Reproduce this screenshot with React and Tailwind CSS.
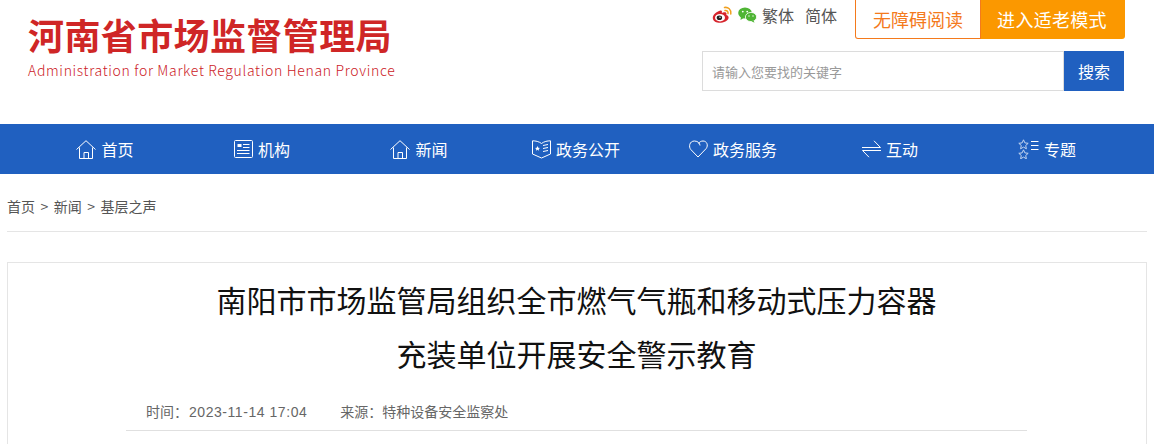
const cjk = { fontFamily: '"Noto Sans CJK SC", "Liberation Sans", sans-serif' };

function WeiboIcon() {
  return (
    <svg width="21" height="18" viewBox="0 0 21 18" fill="none">
      <path d="M8.5 4.5C4.5 5.5 0.5 9 0.8 12.2C1.1 15.5 5 17 9 16.7C13.5 16.3 16.8 14 16.6 11.3C16.5 10 15.3 9.3 14.3 9C14.8 7.5 14.6 6.4 13 6.2C11.8 6.1 10.5 6.6 9.8 7C10.3 5 9.8 4.2 8.5 4.5Z" fill="#d6242c" />
      <ellipse cx="8" cy="11.7" rx="5" ry="3.7" fill="#fff" />
      <ellipse cx="7.4" cy="11.8" rx="2.7" ry="2.3" fill="#222" />
      <circle cx="8" cy="11.2" r="0.7" fill="#fff" />
      <path d="M12.5 1.5C16 0.8 19.5 3.5 18.8 8M13 4.6C14.8 4.2 16.4 5.5 16 7.6" stroke="#f0a020" strokeWidth="1.5" strokeLinecap="round" />
    </svg>
  );
}

function WechatIcon() {
  return (
    <svg width="19" height="16" viewBox="0 0 19 16">
      <ellipse cx="7" cy="6" rx="6.8" ry="5.6" fill="#4fb535" />
      <path d="M3 9.5L2.5 13L6 10.8Z" fill="#4fb535" />
      <ellipse cx="13" cy="10" rx="5.6" ry="4.6" fill="#4fb535" stroke="#fff" strokeWidth="0.8" />
      <path d="M15.5 13.5L16.5 15.7L13.5 14.3Z" fill="#4fb535" />
      <circle cx="4.8" cy="4.6" r="0.9" fill="#fff" />
      <circle cx="9.2" cy="4.6" r="0.9" fill="#fff" />
      <circle cx="11" cy="9" r="0.7" fill="#fff" />
      <circle cx="15" cy="9" r="0.7" fill="#fff" />
    </svg>
  );
}

function HomeIcon() {
  return (
    <svg width="20" height="19" viewBox="0 0 20 19" fill="none" stroke="#fff" strokeWidth="1">
      <path d="M0.5 9.5L10 0.7L19.5 9.5" />
      <path d="M3.5 7.5V18.5H16.5V7.5" />
      <path d="M8 18.5V12.5H12.5V18.5" />
    </svg>
  );
}

function OrgIcon() {
  return (
    <svg width="19" height="18" viewBox="0 0 19 18" fill="none" stroke="#fff" strokeWidth="1">
      <rect x="0.5" y="0.5" width="18" height="17" rx="1" />
      <rect x="3.5" y="4" width="4" height="3" fill="#fff" stroke="none" />
      <path d="M9 4.5H15.5M9 7.5H15.5M3 10.5H15.5M3 13.5H15.5" />
    </svg>
  );
}

function BookIcon() {
  return (
    <svg width="19" height="19" viewBox="0 0 19 19" fill="none" stroke="#fff" strokeWidth="1">
      <path d="M0.5 0.8C3.5 0.8 7 1.5 9.5 3.5C12 1.5 15.5 0.8 18.5 0.8V14L9.5 18L0.5 14Z" />
      <path d="M5.5 6L6.3 7.7L8 7.9L6.7 9L7.1 10.7L5.5 9.8L3.9 10.7L4.3 9L3 7.9L4.7 7.7Z" fill="#fff" stroke="none" />
      <path d="M11 5.5L16 4.5M11 8.5L16 7.5M11 11.5L16 10.5" />
    </svg>
  );
}

function HeartIcon() {
  return (
    <svg width="19" height="18" viewBox="0 0 19 18" fill="none" stroke="#fff" strokeWidth="1">
      <path d="M9 17L1.8 9.5C-0.5 7 0.3 1 5.5 1C9 1 11 3.5 11 5.5M9 17L17.2 8.5C19.5 5.5 18 1 14 1C12 1 10.5 2 9.5 3.5" />
    </svg>
  );
}

function SwapIcon() {
  return (
    <svg width="19" height="18" viewBox="0 0 19 18" fill="none" stroke="#fff" strokeWidth="1">
      <path d="M0 7.5H18.5L12 0.8" />
      <path d="M19 10.5H0.5L7 17.2" />
    </svg>
  );
}

function StarsIcon() {
  const star = "M5.5 0.8L6.9 3.9L10.2 4.3L7.7 6.5L8.4 9.8L5.5 8.1L2.6 9.8L3.3 6.5L0.8 4.3L4.1 3.9Z";
  return (
    <svg width="21" height="20" viewBox="0 0 21 20" fill="none" stroke="#fff" strokeWidth="1">
      <path d={star} stroke="#c5d6f0" />
      <path d={star} stroke="#c5d6f0" transform="translate(0 10)" />
      <path d="M13 2.5H20.5M13 6.5H20.5M13 10.5H20.5" />
    </svg>
  );
}

const navItems = [
  { label: "首页", icon: <HomeIcon /> },
  { label: "机构", icon: <OrgIcon /> },
  { label: "新闻", icon: <HomeIcon /> },
  { label: "政务公开", icon: <BookIcon /> },
  { label: "政务服务", icon: <HeartIcon /> },
  { label: "互动", icon: <SwapIcon /> },
  { label: "专题", icon: <StarsIcon /> },
];

export default function App() {
  return (
    <div className="h-[444px] overflow-hidden bg-white" style={cjk}>
      {/* Header */}
      <div className="flex h-[124px] justify-between pl-[28px] pr-[29px]">
        <div className="pt-[12px]">
          <h1 className="text-[36px] leading-[44px] font-bold tracking-[0.4px] whitespace-nowrap text-[#cf2626]">河南省市场监督管理局</h1>
          <p className="mt-[4px] text-[14px] leading-[20px] font-light tracking-[0.67px] whitespace-nowrap text-[#cc2026]">Administration for Market Regulation Henan Province</p>
        </div>
        <div className="flex w-[423px] flex-col items-start">
          <div className="flex h-[39px] w-full items-start justify-between pl-[10px]">
            <div className="flex items-center pt-[4px] text-[16px] leading-[22px] text-[#555]">
              <WeiboIcon />
              <span className="ml-[5px]"><WechatIcon /></span>
              <span className="ml-[5px]">繁体</span>
              <span className="ml-[11px]">简体</span>
            </div>
            <div className="flex h-[39px] text-[18px]">
              <div className="flex w-[126px] items-center justify-center rounded-bl-[3px] border border-t-0 border-[#f47a1c] text-[#f47a1c]">无障碍阅读</div>
              <div className="flex w-[144px] items-center justify-center rounded-br-[3px] bg-[#fb9800] pr-[2px] text-white">
                <span className="tracking-[0.3px]">进入适老模式</span>
              </div>
            </div>
          </div>
          <div className="mt-[12px] flex h-[40px] w-[422px]">
            <div className="flex flex-1 items-center border border-[#dcdcdc] pt-[1px] pl-[9px] text-[13px] text-[#999]">请输入您要找的关键字</div>
            <div className="flex w-[60px] items-center justify-center bg-[#2060c0] text-[16px] text-white">搜索</div>
          </div>
        </div>
      </div>

      {/* Nav */}
      <div className="flex h-[50px] justify-center bg-[#2060c0] pr-[2px]">
        <div className="grid w-[1099px] grid-cols-7">
          {navItems.map((item) => (
            <div key={item.label} className="flex items-center justify-center gap-[5px] text-[16px] text-white">
              {item.icon}
              <span>{item.label}</span>
            </div>
          ))}
        </div>
      </div>

      {/* Breadcrumb */}
      <div className="mx-[7px] flex h-[58px] items-center gap-[5.5px] border-b border-[#e5e5e5] pt-[8px] text-[14px] text-[#555]">
        <span>首页</span>
        <span>&gt;</span>
        <span>新闻</span>
        <span>&gt;</span>
        <span>基层之声</span>
      </div>

      {/* Article */}
      <div className="mx-[7px] mt-[30px] h-[300px] border border-[#e5e5e5]">
        <h2 className="pt-[9px] pr-[1px] text-center text-[30px] leading-[54px] text-[#111]">
          南阳市市场监管局组织全市燃气气瓶和移动式压力容器
          <br />
          充装单位开展安全警示教育
        </h2>
        <div className="mr-[119px] ml-[118px] mt-[21px] flex h-[30px] items-start gap-[33px] border-b border-[#e0e0e0] pl-[20px] text-[14px] leading-[20px] text-[#666]">
          <span>时间：<span style={{ fontFamily: '"Liberation Sans", sans-serif' }} className="ml-[1px] tracking-[0.55px]">2023-11-14 17:04</span></span>
          <span>来源：特种设备安全监察处</span>
        </div>
      </div>
    </div>
  );
}
